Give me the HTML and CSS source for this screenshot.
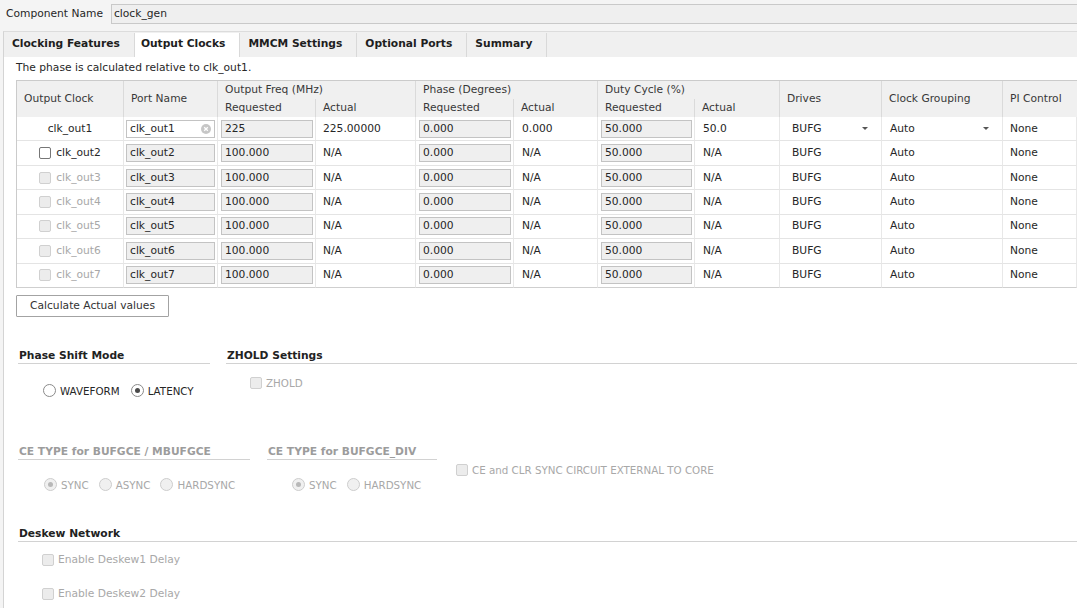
FILE: index.html
```html
<!DOCTYPE html>
<html>
<head>
<meta charset="utf-8">
<link rel="stylesheet" href="styles.css">
</head>
<body>
<div class="top">
  <span class="top-label">Component Name</span>
  <div class="name-field">clock_gen</div>
</div>
<div class="panel">
  <div class="tabs">
    <div class="tab">Clocking Features</div>
    <div class="tab active">Output Clocks</div>
    <div class="tab">MMCM Settings</div>
    <div class="tab">Optional Ports</div>
    <div class="tab">Summary</div>
  </div>
  <div class="content">
    <p class="note">The phase is calculated relative to clk_out1.</p>
    <div class="grid">
      <div class="th span2">Output Clock</div>
      <div class="th span2">Port Name</div>
      <div class="th grp">Output Freq (MHz)</div>
      <div class="th grp">Phase (Degrees)</div>
      <div class="th grp">Duty Cycle (%)</div>
      <div class="th span2">Drives</div>
      <div class="th span2">Clock Grouping</div>
      <div class="th span2 nob">PI Control</div>
      <div class="th">Requested</div>
      <div class="th">Actual</div>
      <div class="th">Requested</div>
      <div class="th">Actual</div>
      <div class="th">Requested</div>
      <div class="th">Actual</div>

      <div class="tr">
        <div class="td oc">clk_out1</div>
        <div class="td f"><div class="fld edit"><span>clk_out1</span><svg class="clear" width="10" height="10" viewBox="0 0 10 10"><circle cx="5" cy="5" r="5" fill="#c6c6c6"/><path d="M3.2 3.2 6.8 6.8M6.8 3.2 3.2 6.8" stroke="#fff" stroke-width="1.3"/></svg></div></div>
        <div class="td f"><div class="fld">225</div></div>
        <div class="td">225.00000</div>
        <div class="td f"><div class="fld">0.000</div></div>
        <div class="td pad8">0.000</div>
        <div class="td f"><div class="fld">50.000</div></div>
        <div class="td pad8">50.0</div>
        <div class="td drv combo"><span>BUFG</span><span class="arrow"></span></div>
        <div class="td grpc combo"><span>Auto</span><span class="arrow"></span></div>
        <div class="td">None</div>
      </div>
      <div class="tr">
        <div class="td oc"><span class="cb"></span>clk_out2</div>
        <div class="td f"><div class="fld">clk_out2</div></div>
        <div class="td f"><div class="fld">100.000</div></div>
        <div class="td">N/A</div>
        <div class="td f"><div class="fld">0.000</div></div>
        <div class="td pad8">N/A</div>
        <div class="td f"><div class="fld">50.000</div></div>
        <div class="td pad8">N/A</div>
        <div class="td drv">BUFG</div>
        <div class="td grpc">Auto</div>
        <div class="td">None</div>
      </div>
      <div class="tr">
        <div class="td oc dis"><span class="cb off"></span>clk_out3</div>
        <div class="td f"><div class="fld">clk_out3</div></div>
        <div class="td f"><div class="fld">100.000</div></div>
        <div class="td">N/A</div>
        <div class="td f"><div class="fld">0.000</div></div>
        <div class="td pad8">N/A</div>
        <div class="td f"><div class="fld">50.000</div></div>
        <div class="td pad8">N/A</div>
        <div class="td drv">BUFG</div>
        <div class="td grpc">Auto</div>
        <div class="td">None</div>
      </div>
      <div class="tr">
        <div class="td oc dis"><span class="cb off"></span>clk_out4</div>
        <div class="td f"><div class="fld">clk_out4</div></div>
        <div class="td f"><div class="fld">100.000</div></div>
        <div class="td">N/A</div>
        <div class="td f"><div class="fld">0.000</div></div>
        <div class="td pad8">N/A</div>
        <div class="td f"><div class="fld">50.000</div></div>
        <div class="td pad8">N/A</div>
        <div class="td drv">BUFG</div>
        <div class="td grpc">Auto</div>
        <div class="td">None</div>
      </div>
      <div class="tr">
        <div class="td oc dis"><span class="cb off"></span>clk_out5</div>
        <div class="td f"><div class="fld">clk_out5</div></div>
        <div class="td f"><div class="fld">100.000</div></div>
        <div class="td">N/A</div>
        <div class="td f"><div class="fld">0.000</div></div>
        <div class="td pad8">N/A</div>
        <div class="td f"><div class="fld">50.000</div></div>
        <div class="td pad8">N/A</div>
        <div class="td drv">BUFG</div>
        <div class="td grpc">Auto</div>
        <div class="td">None</div>
      </div>
      <div class="tr">
        <div class="td oc dis"><span class="cb off"></span>clk_out6</div>
        <div class="td f"><div class="fld">clk_out6</div></div>
        <div class="td f"><div class="fld">100.000</div></div>
        <div class="td">N/A</div>
        <div class="td f"><div class="fld">0.000</div></div>
        <div class="td pad8">N/A</div>
        <div class="td f"><div class="fld">50.000</div></div>
        <div class="td pad8">N/A</div>
        <div class="td drv">BUFG</div>
        <div class="td grpc">Auto</div>
        <div class="td">None</div>
      </div>
      <div class="tr">
        <div class="td oc dis"><span class="cb off"></span>clk_out7</div>
        <div class="td f"><div class="fld">clk_out7</div></div>
        <div class="td f"><div class="fld">100.000</div></div>
        <div class="td">N/A</div>
        <div class="td f"><div class="fld">0.000</div></div>
        <div class="td pad8">N/A</div>
        <div class="td f"><div class="fld">50.000</div></div>
        <div class="td pad8">N/A</div>
        <div class="td drv">BUFG</div>
        <div class="td grpc">Auto</div>
        <div class="td">None</div>
      </div>
    </div>

    <button class="btn">Calculate Actual values</button>

    <div class="sec sec1">
      <div class="group g-phase">
        <div class="head">Phase Shift Mode</div>
        <div class="opts caps">
          <label class="opt"><span class="rb"></span>WAVEFORM</label>
          <label class="opt"><span class="rb on"></span>LATENCY</label>
        </div>
      </div>
      <div class="group g-zhold">
        <div class="head">ZHOLD Settings</div>
        <div class="opts dis caps">
          <label class="opt"><span class="cb off"></span>ZHOLD</label>
        </div>
      </div>
    </div>

    <div class="sec sec2">
      <div class="group g-ce1">
        <div class="head dis">CE TYPE for BUFGCE / MBUFGCE</div>
        <div class="opts dis caps">
          <label class="opt"><span class="rb off on"></span>SYNC</label>
          <label class="opt"><span class="rb off"></span>ASYNC</label>
          <label class="opt"><span class="rb off"></span>HARDSYNC</label>
        </div>
      </div>
      <div class="group g-ce2">
        <div class="head dis">CE TYPE for BUFGCE_DIV</div>
        <div class="opts dis caps">
          <label class="opt"><span class="rb off on"></span>SYNC</label>
          <label class="opt"><span class="rb off"></span>HARDSYNC</label>
        </div>
      </div>
      <div class="group g-ce3 dis caps">
        <label class="opt"><span class="cb off"></span>CE and CLR SYNC CIRCUIT EXTERNAL TO CORE</label>
      </div>
    </div>

    <div class="group g-deskew">
      <div class="head">Deskew Network</div>
      <div class="opts dis first"><label class="opt"><span class="cb off"></span>Enable Deskew1 Delay</label></div>
      <div class="opts dis second"><label class="opt"><span class="cb off"></span>Enable Deskew2 Delay</label></div>
    </div>
  </div>
</div>
</body>
</html>
```

FILE: styles.css
```css
html, body {
  margin: 0;
  padding: 0;
}

body {
  width: 1077px;
  height: 608px;
  overflow: hidden;
  background: #f4f4f4;
  font-family: "DejaVu Sans", sans-serif;
  font-size: 10.7px;
  line-height: 12px;
  color: #262626;
}

.top {
  display: flex;
  align-items: center;
  padding: 4px 0 0 6px;
}

.top-label {
  margin-right: 8px;
}

.name-field {
  flex: 1;
  height: 20px;
  box-sizing: border-box;
  border: 1px solid #c9c9c9;
  border-right: none;
  background: #efefef;
  padding: 0 2px;
  line-height: 18px;
}

.panel {
  margin: 7px 0 0 3px;
  border-left: 1px solid #d4d4d4;
  border-top: 1px solid #dcdcdc;
  background: #fff;
  height: 600px;
}

.tabs {
  display: flex;
  align-items: flex-end;
  height: 25px;
  background: #f0f0f0;
}

.tab {
  height: 24px;
  line-height: 22px;
  padding: 0 14px 0 8px;
  font-weight: bold;
  color: #1e1e1e;
  border-right: 1px solid #d9d9d9;
}

.tab.active {
  background: #fff;
  padding-left: 6px;
}

.content {
  padding: 5px 0 0 12px;
}

.note {
  margin: 0;
  line-height: 12px;
}

.grid {
  margin-top: 6px;
  display: grid;
  grid-template-columns: 107px 94px 98px 100px 98px 84px 97px 85px 102px 121px 74px;
  grid-template-rows: 18px 18px repeat(7, 24.43px);
  border-top: 1px solid #cbcbcb;
  border-left: 1px solid #cbcbcb;
  white-space: nowrap;
}

.th {
  background: #f0f0f0;
  border-right: 1px solid #dadada;
  padding-left: 7px;
  display: flex;
  align-items: center;
  color: #383838;
}

.th.span2 {
  grid-row: span 2;
}

.th.grp {
  grid-column: span 2;
}

.th.nob {
  border-right: none;
}

.tr {
  display: contents;
}

.td {
  display: flex;
  align-items: center;
  padding: 0 7px;
  border-right: 1px solid #e8e8e8;
  border-bottom: 1px solid #e4e4e4;
  background: #fff;
  overflow: hidden;
  color: #262626;
}

.tr:last-child .td {
  border-bottom-color: #cfcfcf;
}

.td.pad8 {
  padding-left: 8px;
}

.td.f {
  padding: 0 2px 0 3px;
}

.td.f:nth-child(2) {
  padding-left: 2px;
}

.td.oc {
  justify-content: center;
  gap: 5px;
}

.td.dis {
  color: #a8a8a8;
}

.td.drv {
  padding-left: 12px;
}

.td.grpc {
  padding-left: 8px;
}

.td.combo {
  justify-content: space-between;
  padding-right: 13px;
}

.arrow {
  width: 0;
  height: 0;
  border-left: 3px solid transparent;
  border-right: 3px solid transparent;
  border-top: 3px solid #555;
}

.fld {
  flex: 1;
  height: 18px;
  box-sizing: border-box;
  border: 1px solid #c3c3c3;
  background: #efefef;
  padding: 0 3px;
  line-height: 16px;
  color: #262626;
}

.fld.edit {
  background: #fff;
  display: flex;
  justify-content: space-between;
  align-items: center;
}

.clear {
  display: block;
}

.cb {
  display: inline-block;
  width: 12px;
  height: 12px;
  box-sizing: border-box;
  border: 1px solid #767676;
  border-radius: 2px;
  background: #fff;
  flex: none;
}

.cb.off {
  border-color: #d0d0d0;
  background: #ececec;
}

.rb {
  display: inline-flex;
  align-items: center;
  justify-content: center;
  width: 13px;
  height: 13px;
  box-sizing: border-box;
  border: 1px solid #8a8a8a;
  border-radius: 50%;
  background: #fff;
  flex: none;
}

.rb.on::after {
  content: "";
  width: 5px;
  height: 5px;
  border-radius: 50%;
  background: #4a4a4a;
}

.rb.off {
  border-color: #cdcdcd;
  background: #f0f0f0;
}

.rb.off.on::after {
  background: #b8b8b8;
}

.btn {
  display: block;
  margin-top: 7px;
  width: 153px;
  height: 22px;
  padding: 0;
  background: #fff;
  border: 1px solid #a3a3a3;
  border-radius: 1px;
  font: inherit;
  color: #333;
}

.sec {
  display: flex;
  align-items: flex-start;
  margin-left: 2px;
}

.sec1 {
  margin-top: 33px;
}

.sec2 {
  margin-top: 48px;
}

.head {
  font-weight: bold;
  line-height: 12px;
  padding: 0 0 1px 1px;
  border-bottom: 1px solid #d2d2d2;
  color: #222;
}

.head.dis {
  color: #9c9c9c;
}

.opts {
  display: flex;
  align-items: center;
  height: 14px;
  gap: 10px;
}

.caps .opt {
  font-size: 10.3px;
}

.opt {
  display: flex;
  align-items: center;
  gap: 4px;
}

.dis {
  color: #a8a8a8;
}

.g-phase {
  width: 192px;
}

.g-phase .opts {
  margin-top: 20px;
  padding-left: 25px;
  gap: 11px;
}

.g-zhold {
  flex: 1;
  margin-left: 16px;
}

.g-zhold .opts {
  margin-top: 12px;
  padding-left: 24px;
}

.g-ce1 {
  width: 232px;
}

.g-ce2 {
  width: 170px;
  margin-left: 17px;
}

.g-ce1 .opts,
.g-ce2 .opts {
  margin-top: 18px;
  padding-left: 26px;
}

.g-ce2 .opts {
  padding-left: 25px;
}

.g-ce3 {
  margin-left: 19px;
  padding-top: 17px;
}

.g-ce3 .opt {
  height: 14px;
}

.g-deskew {
  margin: 36px 0 0 2px;
}

.g-deskew .opts {
  padding-left: 24px;
}

.g-deskew .first {
  margin-top: 11px;
}

.g-deskew .second {
  margin-top: 20px;
}
```
